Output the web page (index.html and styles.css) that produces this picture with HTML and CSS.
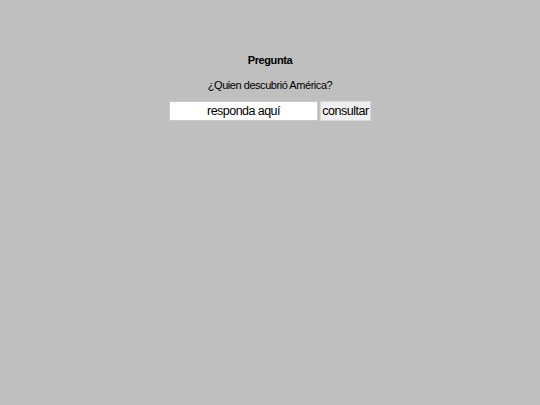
FILE: index.html
```html
<!DOCTYPE html>
<html lang="es">
<head>
<meta charset="utf-8">
<link rel="stylesheet" href="styles.css">
</head>
<body>
<main class="quiz">
  <h1 class="title">Pregunta</h1>
  <p class="question">¿Quien descubrió América?</p>
  <form class="answer">
    <input class="answer-input" type="text" value="responda aquí">
    <button class="answer-button" type="button">consultar</button>
  </form>
</main>
</body>
</html>
```

FILE: styles.css
```css
html, body {
  margin: 0;
  padding: 0;
  background: #bfbfbf;
  font-family: "Liberation Sans", Arial, sans-serif;
  color: #000;
}
.quiz {
  display: flex;
  flex-direction: column;
  align-items: center;
  padding-top: 54px;
}
.title {
  margin: 0;
  font-size: 11px;
  font-weight: bold;
  line-height: 13px;
  letter-spacing: -0.4px;
}
.question {
  margin: 12px 0 0;
  font-size: 11px;
  line-height: 13px;
  letter-spacing: -0.45px;
}
.answer {
  display: flex;
  gap: 2px;
  margin-top: 9px;
}
.answer-input {
  box-sizing: border-box;
  width: 149px;
  height: 20px;
  margin: 0;
  padding: 0 2px;
  border: 1px solid #c8c8c8;
  background: #fff;
  font-family: "Liberation Sans", Arial, sans-serif;
  font-size: 12.5px;
  letter-spacing: -0.55px;
  text-align: center;
  color: #000;
}
.answer-button {
  box-sizing: border-box;
  width: 51px;
  height: 20px;
  margin: 0;
  padding: 0;
  border: 1px solid #d8d8d8;
  background: #efefef;
  font-family: "Liberation Sans", Arial, sans-serif;
  font-size: 12.5px;
  letter-spacing: -0.45px;
  color: #000;
}
```
